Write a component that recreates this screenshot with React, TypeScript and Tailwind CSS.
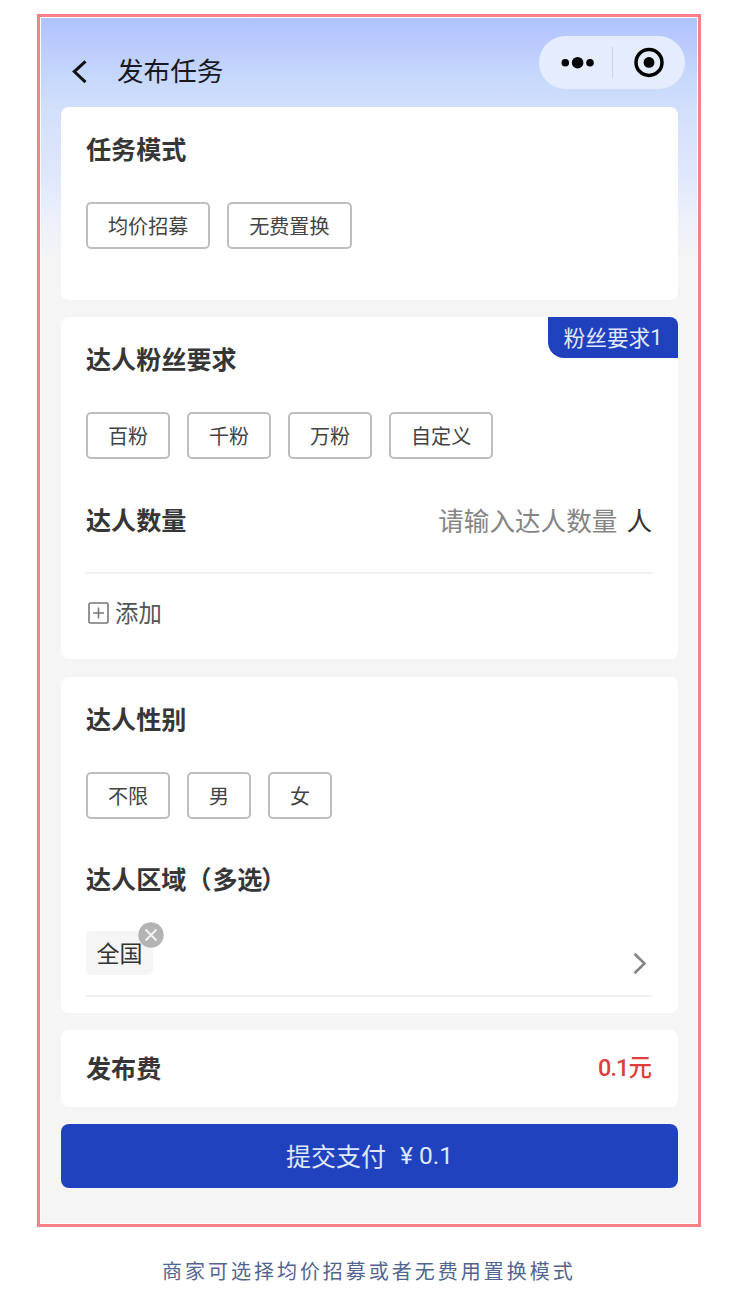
import type { ReactNode } from 'react';

function Card({ className, children }: { className: string; children: ReactNode }) {
  return <section className={`w-[617px] rounded-lg bg-white pl-[25px] pr-[26px] ${className}`}>{children}</section>;
}

function Heading({ children }: { children: ReactNode }) {
  return <h2 className="text-[25.1px] leading-[26px] font-bold text-[#363636]">{children}</h2>;
}

function Chips({ items }: { items: string[] }) {
  return (
    <div className="mt-[41px] flex gap-[16.8px]">
      {items.map((item) => (
        <button
          key={item}
          className="flex h-[47px] items-center rounded-[5px] border-2 border-[#bebebe] px-5 text-[20.1px] leading-5 text-[#444444]"
        >
          {item}
        </button>
      ))}
    </div>
  );
}

export default function App() {
  return (
    <main
      className="flex h-[1302px] w-[730px] flex-col items-start overflow-hidden bg-white pt-[14px] pl-[37px]"
      style={{ fontFamily: '"Noto Sans CJK SC", sans-serif' }}
    >
      <div className="h-[1213px] w-[664px] border-[3px] border-[#fb7f86] bg-white p-px">
        <div className="h-full bg-[#f5f5f5] bg-[linear-gradient(180deg,#aec4fe_0px,#bccbfd_28px,#c6d8fb_60px,#d2dffb_90px,#dfe7fc_155px,#ecf0fa_200px,#f5f5f5_245px)] pl-5">
          <header className="flex h-[89px] items-start">
            <svg className="mt-[41px] ml-[9px] h-[26px] w-[18px]" viewBox="0 0 18 26" fill="none" stroke="#111111" strokeWidth="3">
              <path d="M15.5 2.3 4.3 12.6l11.2 10.5" />
            </svg>
            <h1 className="mt-[37px] ml-[29px] text-[26.6px] leading-[30px] text-[#17191f]">发布任务</h1>
            <div className="mt-[18px] ml-auto mr-[12px] flex h-[53px] w-[146px] items-center rounded-full bg-[#e4ecfd]">
              <svg className="h-[53px] w-[146px]" viewBox="0 0 146 53">
                <circle cx="26.3" cy="26.7" r="3.8" />
                <circle cx="38.6" cy="26.7" r="5.8" />
                <circle cx="51" cy="26.7" r="3.8" />
                <path d="M73.5 11v31" stroke="#cdd5e6" strokeWidth="1.2" />
                <circle cx="110" cy="26.4" r="13" fill="none" stroke="#000" strokeWidth="3.5" />
                <circle cx="110" cy="26.4" r="5.4" />
              </svg>
            </div>
          </header>

          <Card className="h-[193px] pt-[28px]">
            <Heading>任务模式</Heading>
            <Chips items={['均价招募', '无费置换']} />
          </Card>

          <Card className="relative mt-[17px] h-[342px] pt-[28px]">
            <span className="absolute top-0 right-0 flex h-[41px] w-[130px] items-center justify-center rounded-tr-lg rounded-bl-[16px] bg-[#2041bd] pb-0.5 text-[21.7px] leading-6 text-[#e3e9fc]">
              粉丝要求<span className="pt-0.5 font-[Roboto]">1</span>
            </span>
            <Heading>达人粉丝要求</Heading>
            <Chips items={['百粉', '千粉', '万粉', '自定义']} />
            <div className="mt-[47px] flex justify-between">
              <Heading>达人数量</Heading>
              <div className="flex gap-[9px] text-[25.6px] leading-[28px] text-[#858585]">
                <span>请输入达人数量</span>
                <span className="text-[#333333]">人</span>
              </div>
            </div>
            <div className="mt-[38px] h-[2px] bg-[#f1f1f1]" />
            <button className="mt-[25px] ml-[2px] flex items-center gap-[6px] text-[23.4px] leading-[27px] text-[#555555]">
              <svg className="h-[22px] w-[21px]" viewBox="0 0 21 22" fill="none" stroke="#777777" strokeWidth="1.6">
                <rect x="1" y="1" width="19" height="20" rx="1.5" />
                <path d="M5 11h11M10.5 5.5v11" />
              </svg>
              添加
            </button>
          </Card>

          <Card className="mt-[18px] h-[336px] pt-[28px]">
            <Heading>达人性别</Heading>
            <Chips items={['不限', '男', '女']} />
            <div className="mt-[46px]">
              <Heading>
                达人区域（<span className="ml-[1px] tracking-[-0.3px]">多选</span>
                <span className="-ml-[1px]">）</span>
              </Heading>
            </div>
            <div className="mt-[40px] flex h-[64px] items-start justify-between">
              <span className="relative flex h-[44px] w-[67px] items-center justify-center rounded-[5px] bg-[#f5f5f5] pb-0.5 text-[23px] leading-6 text-[#333333]">
                全国
                <svg className="absolute -top-[9px] left-[52px] h-[26px] w-[26px]" viewBox="0 0 26 26">
                  <circle cx="13" cy="13" r="12.7" fill="#b3b3b3" />
                  <path d="m7.5 7.5 11 11m0-11-11 11" stroke="#f4f4f4" strokeWidth="1.8" />
                </svg>
              </span>
              <svg className="mt-[21px] mr-[4px] h-[23px] w-[16px]" viewBox="0 0 16 23" fill="none" stroke="#858585" strokeWidth="2.6">
                <path d="m2.5 1.8 10 9.7-10 9.7" />
              </svg>
            </div>
            <div className="h-[2px] bg-[#f1f1f1]" />
          </Card>

          <Card className="mt-[17px] flex h-[77px] items-center justify-between pb-[3px]">
            <Heading>发布费</Heading>
            <span className="text-[23.5px] leading-[26px] font-medium text-[#dc3f3c]">
              <span className="font-[Roboto] text-[23.5px] tracking-[-0.9px]">0.1</span>元
            </span>
          </Card>

          <button className="mt-[17px] flex h-[64px] w-[617px] items-center justify-center gap-[14px] rounded-lg bg-[#2142bf] pb-0.5 text-[25px] leading-7 text-[#dfe7fc]">
            <span>提交支付</span>
            <span className="pt-0.5 font-[Roboto] text-[24.5px]">¥ 0.1</span>
          </button>
        </div>
      </div>
      <p className="mt-[30px] ml-[125px] text-[20px] leading-[28px] tracking-[2.98px] whitespace-nowrap text-[#52658f]">
        商家可选择均价招募或者无费用置换模式
      </p>
    </main>
  );
}
